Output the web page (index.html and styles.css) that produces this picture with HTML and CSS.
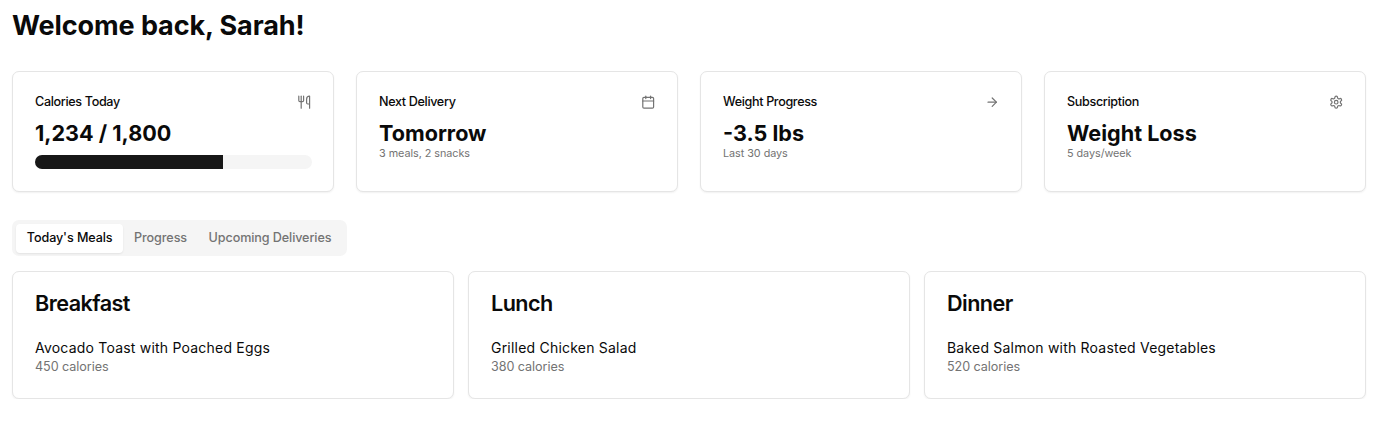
FILE: index.html
```
<!DOCTYPE html>
<html lang="en">
<head>
<meta charset="utf-8">
<title>Dashboard</title>
<link rel="stylesheet" href="styles.css">
</head>
<body>
<main class="page">
  <h1 class="welcome">Welcome back, Sarah!</h1>
  <section class="stats">
    <article class="card stat">
      <header class="stat-head"><h3 class="label">Calories Today</h3>
        <svg class="icon" viewBox="0 0 24 24"><path d="M3 2v7c0 1.1.9 2 2 2h4a2 2 0 0 0 2-2V2"/><path d="M7 2v20"/><path d="M21 15V2a5 5 0 0 0-5 5v6c0 1.1.9 2 2 2h3Zm0 0v7"/></svg>
      </header>
      <div class="value">1,234 / 1,800</div>
      <div class="track"><div class="fill" style="width: 68%"></div></div>
    </article>
    <article class="card stat">
      <header class="stat-head"><h3 class="label">Next Delivery</h3>
        <svg class="icon" viewBox="0 0 24 24"><path d="M8 2v4"/><path d="M16 2v4"/><rect width="18" height="18" x="3" y="4" rx="2"/><path d="M3 10h18"/></svg>
      </header>
      <div class="value">Tomorrow</div>
      <p class="note">3 meals, 2 snacks</p>
    </article>
    <article class="card stat">
      <header class="stat-head"><h3 class="label">Weight Progress</h3>
        <svg class="icon" viewBox="0 0 24 24"><path d="M5 12h14"/><path d="m12 5 7 7-7 7"/></svg>
      </header>
      <div class="value">-3.5 lbs</div>
      <p class="note">Last 30 days</p>
    </article>
    <article class="card stat">
      <header class="stat-head"><h3 class="label">Subscription</h3>
        <svg class="icon" viewBox="0 0 24 24"><path d="M12.22 2h-.44a2 2 0 0 0-2 2v.18a2 2 0 0 1-1 1.73l-.43.25a2 2 0 0 1-2 0l-.15-.08a2 2 0 0 0-2.73.73l-.22.38a2 2 0 0 0 .73 2.73l.15.1a2 2 0 0 1 1 1.72v.51a2 2 0 0 1-1 1.74l-.15.09a2 2 0 0 0-.73 2.73l.22.38a2 2 0 0 0 2.73.73l.15-.08a2 2 0 0 1 2 0l.43.25a2 2 0 0 1 1 1.73V20a2 2 0 0 0 2 2h.44a2 2 0 0 0 2-2v-.18a2 2 0 0 1 1-1.73l.43-.25a2 2 0 0 1 2 0l.15.08a2 2 0 0 0 2.73-.73l.22-.39a2 2 0 0 0-.73-2.73l-.15-.08a2 2 0 0 1-1-1.74v-.5a2 2 0 0 1 1-1.74l.15-.09a2 2 0 0 0 .73-2.73l-.22-.38a2 2 0 0 0-2.73-.73l-.15.08a2 2 0 0 1-2 0l-.43-.25a2 2 0 0 1-1-1.73V4a2 2 0 0 0-2-2z"/><circle cx="12" cy="12" r="3"/></svg>
      </header>
      <div class="value">Weight Loss</div>
      <p class="note">5 days/week</p>
    </article>
  </section>
  <nav class="tabs">
    <button class="tab active">Today's Meals</button>
    <button class="tab">Progress</button>
    <button class="tab">Upcoming Deliveries</button>
  </nav>
  <section class="meals">
    <article class="card meal">
      <h2 class="meal-title">Breakfast</h2>
      <p class="dish">Avocado Toast with Poached Eggs</p>
      <p class="calories">450 calories</p>
    </article>
    <article class="card meal">
      <h2 class="meal-title">Lunch</h2>
      <p class="dish">Grilled Chicken Salad</p>
      <p class="calories">380 calories</p>
    </article>
    <article class="card meal">
      <h2 class="meal-title">Dinner</h2>
      <p class="dish">Baked Salmon with Roasted Vegetables</p>
      <p class="calories">520 calories</p>
    </article>
  </section>
</main>
</body>
</html>
```
FILE: styles.css
```
* { box-sizing: border-box; margin: 0; padding: 0; }
body { background: #fff; color: #0a0a0a; font-family: Inter, sans-serif; }
.page { padding: 8px 20px 0 12px; }
.welcome { font-size: 27px; line-height: 36px; font-weight: 700; letter-spacing: -.09px; margin-bottom: 27px; }
.stats { display: grid; grid-template-columns: repeat(4, 1fr); gap: 22px; }
.card { background: #fff; border: 1px solid #e5e5e5; border-radius: 7px; box-shadow: 0 1px 2px rgba(0, 0, 0, .06); }
.stat { height: 121px; padding: 21px 21px 0 22px; }
.stat-head { display: flex; align-items: center; justify-content: space-between; height: 18px; margin-bottom: 8px; }
.label { font-size: 12.6px; line-height: 18px; font-weight: 500; letter-spacing: -.35px; }
.icon { width: 14.4px; height: 14.4px; margin: 1px 1px 0 0; fill: none; stroke: #737373; stroke-width: 2; stroke-linecap: round; stroke-linejoin: round; }
.value { font-size: 21.6px; line-height: 29px; font-weight: 700; }
.track { height: 14px; margin-top: 7px; border-radius: 7px; background: #f5f5f5; overflow: hidden; }
.fill { height: 100%; background: #171717; }
.note { font-size: 10.8px; line-height: 14px; margin-top: -1px; color: #737373; letter-spacing: -.04px; }
.tabs { display: flex; width: 335px; height: 36px; margin: 28px 0 15px; padding: 4px; border-radius: 7px; background: #f5f5f5; }
.tab { height: 28.8px; padding: 0 10.8px; border: 0; border-radius: 4px; background: transparent; color: #737373; font: 500 12.6px/28px Inter, sans-serif; letter-spacing: -.1px; white-space: nowrap; }
.active { background: #fff; color: #0a0a0a; box-shadow: 0 1px 2px rgba(0, 0, 0, .08); }
.meals { display: grid; grid-template-columns: repeat(3, 1fr); gap: 14px; }
.meal { height: 128px; padding: 20px 22px 0; }
.meal-title { font-size: 21.6px; line-height: 22px; font-weight: 600; letter-spacing: -.56px; margin-bottom: 24px; }
.dish { font-size: 14px; line-height: 20px; letter-spacing: .21px; }
.calories { font-size: 12.6px; line-height: 18px; color: #737373; letter-spacing: -.06px; }
```
